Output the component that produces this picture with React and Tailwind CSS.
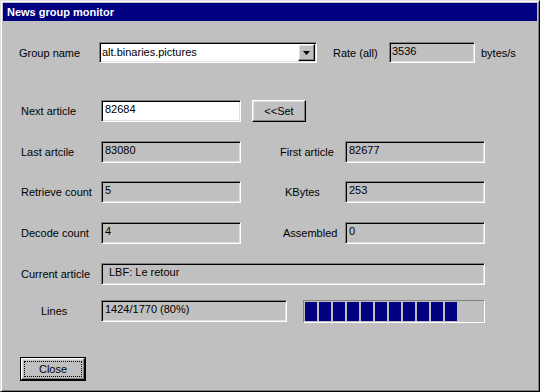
// App.jsx
import React from 'react';

const sunken =
  "border border-t-[#808080] border-l-[#808080] border-b-white border-r-white shadow-[inset_1px_1px_0_#000,inset_-1px_-1px_0_#dfdfdf]";
const raised =
  "border border-t-white border-l-white border-b-black border-r-black shadow-[inset_-1px_-1px_0_#808080,inset_1px_1px_0_#dfdfdf]";

const Field = ({ value, width, white = false, pad = "pl-[3px]" }) => (
  <div className={`${sunken} ${width} shrink-0 h-[22px] ${white ? "bg-white" : "bg-[#c0c0c0]"} ${pad} pt-[1px] leading-[14px] whitespace-nowrap overflow-hidden`}>
    {value}
  </div>
);

const Label = ({ children, className = "" }) => (
  <span className={`shrink-0 leading-[22px] whitespace-nowrap ${className}`}>{children}</span>
);

const App = () => {
  const blocks = Array.from({ length: 11 });

  return (
    <div className="w-[540px] h-[392px] bg-[#c0c0c0] border border-t-[#dfdfdf] border-l-[#dfdfdf] border-b-black border-r-black shadow-[inset_1px_1px_0_#fff,inset_-1px_-1px_0_#808080] p-[2px] text-[11px] text-black font-['Liberation_Sans',Arial,sans-serif] overflow-hidden">
      <div className="h-[18px] bg-[#000080] text-white font-bold text-[11px] leading-[18px] pl-[4px]">
        News group monitor
      </div>

      <div className="flex flex-col">
        {/* group name */}
        <div className="flex items-center mt-[21px] h-[21px]">
          <Label className="w-[96px] pl-[16px]">Group name</Label>
          <div className={`${sunken} shrink-0 w-[218px] h-[21px] bg-white flex items-center`}>
            <span className="flex-1 pl-[2px] leading-[17px]">alt.binaries.pictures</span>
            <div className={`${raised} w-[17px] h-[17px] mr-[1px] bg-[#c0c0c0] flex items-center justify-center`}>
              <svg width="7" height="4" viewBox="0 0 7 4">
                <path d="M0 0h7L3.5 4z" fill="#000" />
              </svg>
            </div>
          </div>
          <Label className="ml-[16px] w-[56px]">Rate (all)</Label>
          <div className={`${sunken} shrink-0 w-[86px] h-[21px] pl-[2px] pt-[1px] leading-[14px]`}>3536</div>
          <Label className="ml-[6px]">bytes/s</Label>
        </div>

        {/* next article */}
        <div className="flex items-center mt-[37px] h-[22px]">
          <Label className="w-[98px] pl-[18px]">Next article</Label>
          <Field value="82684" width="w-[140px]" white />
          <button className={`${raised} shrink-0 ml-[11px] w-[54px] h-[22px] bg-[#c0c0c0] text-[11px] leading-[18px]`}>
            &lt;&lt;Set
          </button>
        </div>

        {/* last / first */}
        <div className="flex items-center mt-[19px] h-[22px]">
          <Label className="w-[98px] pl-[18px]">Last artcile</Label>
          <Field value="83080" width="w-[140px]" />
          <Label className="w-[104px] pl-[39px]">First article</Label>
          <Field value="82677" width="w-[140px]" />
        </div>

        {/* retrieve / kbytes */}
        <div className="flex items-center mt-[18px] h-[22px]">
          <Label className="w-[98px] pl-[18px]">Retrieve count</Label>
          <Field value="5" width="w-[140px]" />
          <Label className="w-[104px] pl-[44px]">KBytes</Label>
          <Field value="253" width="w-[140px]" />
        </div>

        {/* decode / assembled */}
        <div className="flex items-center mt-[19px] h-[22px]">
          <Label className="w-[98px] pl-[18px]">Decode count</Label>
          <Field value="4" width="w-[140px]" />
          <Label className="w-[104px] pl-[42px]">Assembled</Label>
          <Field value="0" width="w-[140px]" />
        </div>

        {/* current article */}
        <div className="flex items-center mt-[19px] h-[22px]">
          <Label className="w-[98px] pl-[18px]">Current article</Label>
          <Field value="LBF: Le retour" width="w-[384px]" pad="pl-[7px]" />
        </div>

        {/* lines + progress */}
        <div className="flex items-center mt-[15px] h-[22px]">
          <Label className="w-[98px] pl-[38px]">Lines</Label>
          <Field value="1424/1770 (80%)" width="w-[186px]" />
          <div className="shrink-0 ml-[16px] w-[182px] h-[23px] border border-t-[#808080] border-l-[#808080] border-b-white border-r-white flex items-stretch gap-[2px] px-[1px] py-[1px]">
            {blocks.map((_, i) => (
              <div key={i} className="w-[12px] bg-[#000080]" />
            ))}
          </div>
        </div>

        {/* close */}
        <div className="flex mt-[35px] pl-[17px]">
          <button className="w-[66px] h-[24px] border border-black bg-[#c0c0c0] p-0">
            <div className={`${raised} w-full h-full flex items-center justify-center p-[2px]`}>
              <div className="w-full h-full border border-dotted border-black flex items-center justify-center leading-[14px] text-[11px]">
                Close
              </div>
            </div>
          </button>
        </div>
      </div>
    </div>
  );
};

export default App;
